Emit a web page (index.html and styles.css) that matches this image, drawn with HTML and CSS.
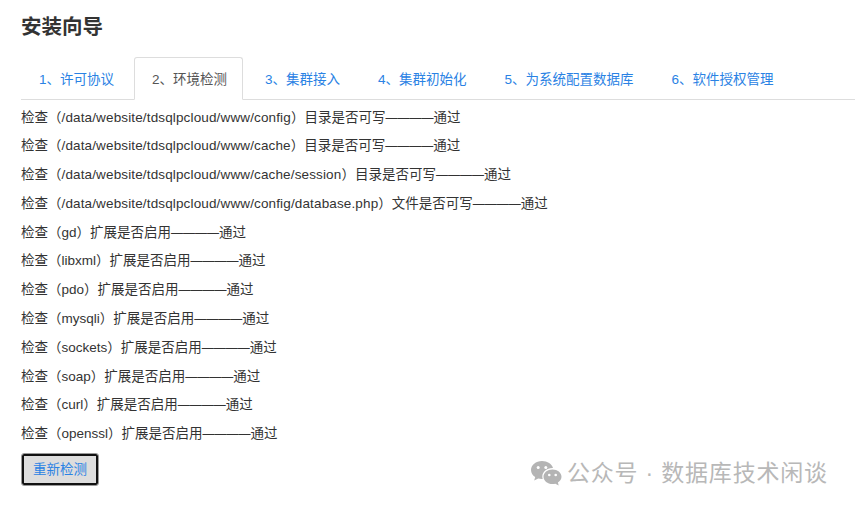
FILE: index.html
```html
<!DOCTYPE html>
<html lang="zh-CN">
<head>
<meta charset="utf-8">
<title>安装向导</title>
<link rel="stylesheet" href="styles.css">
</head>
<body>
<main class="page">
  <h1 class="title">安装向导</h1>
  <ul class="tabs">
    <li class="tab"><a href="#">1、许可协议</a></li>
    <li class="tab active"><a href="#">2、环境检测</a></li>
    <li class="tab"><a href="#">3、集群接入</a></li>
    <li class="tab"><a href="#">4、集群初始化</a></li>
    <li class="tab"><a href="#">5、为系统配置数据库</a></li>
    <li class="tab"><a href="#">6、软件授权管理</a></li>
  </ul>
  <div class="checks">
    <p class="check">检查（<span class="path">/data/website/tdsqlpcloud/www/config</span>）目录是否可写<span class="dash">————</span>通过</p>
    <p class="check">检查（<span class="path">/data/website/tdsqlpcloud/www/cache</span>）目录是否可写<span class="dash">————</span>通过</p>
    <p class="check">检查（<span class="path">/data/website/tdsqlpcloud/www/cache/session</span>）目录是否可写<span class="dash">————</span>通过</p>
    <p class="check">检查（<span class="path">/data/website/tdsqlpcloud/www/config/database.php</span>）文件是否可写<span class="dash">————</span>通过</p>
    <p class="check">检查（<span class="ext">gd</span>）扩展是否启用<span class="dash">————</span>通过</p>
    <p class="check">检查（<span class="ext">libxml</span>）扩展是否启用<span class="dash">————</span>通过</p>
    <p class="check">检查（<span class="ext">pdo</span>）扩展是否启用<span class="dash">————</span>通过</p>
    <p class="check">检查（<span class="ext">mysqli</span>）扩展是否启用<span class="dash">————</span>通过</p>
    <p class="check">检查（<span class="ext">sockets</span>）扩展是否启用<span class="dash">————</span>通过</p>
    <p class="check">检查（<span class="ext">soap</span>）扩展是否启用<span class="dash">————</span>通过</p>
    <p class="check">检查（<span class="ext">curl</span>）扩展是否启用<span class="dash">————</span>通过</p>
    <p class="check">检查（<span class="ext">openssl</span>）扩展是否启用<span class="dash">————</span>通过</p>
  </div>
  <button class="recheck" type="button">重新检测</button>
</main>
<div class="watermark">
  <svg class="wechat" viewBox="0 0 32 26" width="32" height="26" aria-hidden="true">
    <path fill="#b4b4b4" d="M12 1C5.900 1 1 5 1 10c0 2.900 1.600 5.400 4.200 7.100L4.200 20.600l4-2c1.200.3 2.400.5 3.700.5h.8c-.3-.9-.4-1.700-.4-2.500 0-4.800 4.500-8.500 10-8.500h.7C21.900 4 17.400 1 12 1z"/>
    <circle cx="8.200" cy="7.500" r="1.500" fill="#fff"/>
    <circle cx="15.800" cy="7.500" r="1.500" fill="#fff"/>
    <path fill="#b4b4b4" d="M22.500 9.500c-5 0-9 3.200-9 7.300s4 7.300 9 7.300c1 0 2-.1 2.900-.4l3.300 1.800-.8-3c2.200-1.400 3.600-3.400 3.600-5.700 0-4.100-4-7.300-9-7.300z"/>
    <circle cx="19.300" cy="15" r="1.300" fill="#fff"/>
    <circle cx="25.700" cy="15" r="1.300" fill="#fff"/>
  </svg>
  <span>公众号 · 数据库技术闲谈</span>
</div>
</body>
</html>
```
FILE: styles.css
```css
* { box-sizing: border-box; }
html, body { margin: 0; height: 100%; }
body {
  width: 855px;
  height: 507px;
  overflow: hidden;
  background: #fff;
  color: #333;
  font-family: "Liberation Sans", "Noto Sans CJK SC", sans-serif;
  font-size: 13.500px;
  position: relative;
}
.page { padding: 14px 0 0 21px; }
.title {
  margin: 0 0 17px;
  font-size: 20.500px;
  line-height: 26px;
  font-weight: 700;
  color: #333;
}
.tabs {
  display: flex;
  gap: 4px;
  margin: 0;
  padding: 0;
  list-style: none;
  height: 43px;
  border-bottom: 1px solid #ddd;
}
.tab { height: 43px; border: 1px solid transparent; border-radius: 3px 3px 0 0; padding: 0 15px 0 17px; }
.tab a { display: block; line-height: 43px; color: #2a82e4; text-decoration: none; }
.tab.active { background: #fff; border-color: #ddd #ddd #fff; }
.tab.active a { color: #555; }
.checks { padding-top: 3.500px; }
.check { margin: 0; height: 28.800px; line-height: 28.800px; white-space: nowrap; }
.path { letter-spacing: 0.140px; }
.ext { letter-spacing: 0; }
.dash { font-size: 12px; }
.recheck {
  display: block;
  margin-top: 4px;
  width: 78px;
  height: 33px;
  padding: 0 0 4px;
  font: inherit;
  color: #2a82e4;
  background: #ddd;
  border: 1px solid #999;
  border-radius: 3px;
  box-shadow: inset 0 0 0 2px #111;
}
.watermark {
  position: absolute;
  left: 530px;
  top: 458px;
  display: flex;
  align-items: center;
  gap: 5px;
  color: #b8b8b8;
  font-size: 23px;
  line-height: 30px;
  letter-spacing: 0.800px;
}
```
